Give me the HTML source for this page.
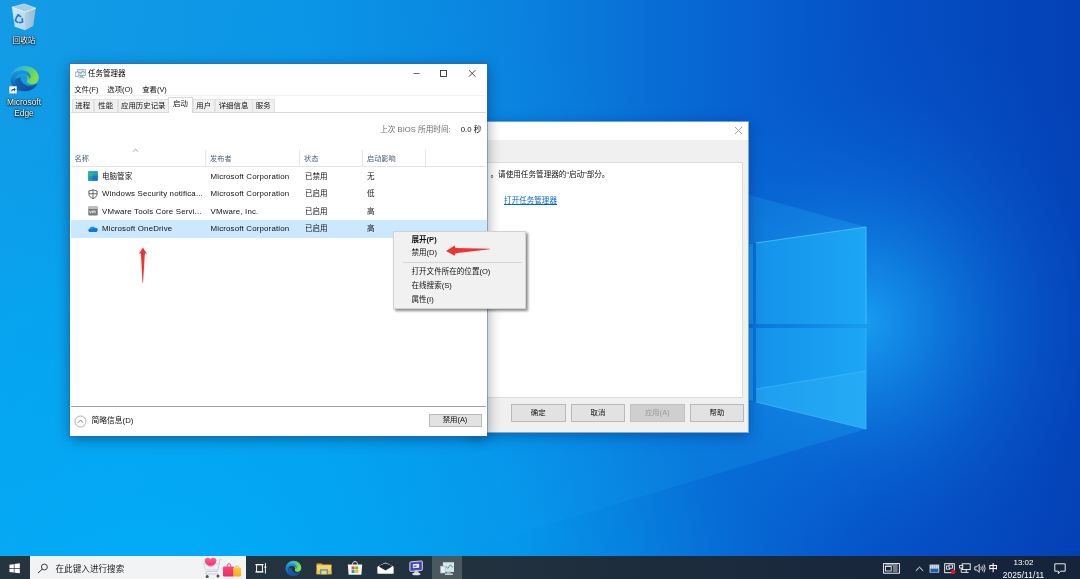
<!DOCTYPE html>
<html lang="zh-CN">
<head>
<meta charset="utf-8">
<title>任务管理器</title>
<style>
*{box-sizing:border-box;margin:0;padding:0}
html,body{width:1080px;height:579px;overflow:hidden;background:#0a6fd2}
body{position:relative;font-family:"Liberation Sans","Noto Sans CJK SC",sans-serif;font-size:7.4px;color:#111;line-height:1}
.abs{position:absolute}
#tm,#dlg,#ctx,#tb,.dlabel{will-change:transform}
.t{position:absolute;white-space:nowrap;line-height:10px;height:10px}
#wall{position:absolute;left:0;top:0;width:1080px;height:579px}
/* desktop icons */
.dlabel{position:absolute;color:#fff;text-align:center;font-size:7.6px;line-height:10.5px;text-shadow:0 0 2px rgba(0,0,0,.95),0 1px 2px rgba(0,0,0,.85),0 0 1px rgba(0,0,0,.8);white-space:nowrap}
/* system config dialog */
#dlg{position:absolute;left:470px;top:120.6px;width:279px;height:312.4px;background:#f0f0f0;border:1px solid #7fa9d8;border-top-color:#6aa0d8;box-shadow:0 3px 12px rgba(0,20,70,.35)}
#dlg .title{position:absolute;left:0;top:0;right:0;height:18.4px;background:#fff}
#dlg .pane{position:absolute;left:8px;top:39.9px;width:264px;height:236.3px;background:#fff;border:1px solid #dcdcdc}
.btn{position:absolute;height:17.5px;border:1px solid #b9b9b9;background:#e2e2e2;text-align:center;line-height:15.5px;font-size:7.4px;color:#111;white-space:nowrap}
.btn.dis{color:#9a9a9a;background:#cfcfcf;border-color:#c2c2c2}
/* task manager */
#tm{position:absolute;left:70px;top:64px;width:417px;height:372px;background:#fff;border:1px solid #fff;outline:1px solid rgba(70,100,140,.45);box-shadow:0 3px 13px rgba(0,10,40,.42)}
.tab{position:absolute;top:33.8px;height:13.2px;background:#f0f0f0;border:1px solid #e2e2e2;border-bottom:none;text-align:center;line-height:12px;font-size:7.4px;white-space:nowrap}
.tab.sel{top:31.8px;height:16.2px;background:#fff;line-height:12.4px;z-index:2;border-color:#d9d9d9}
.hdr{position:absolute;color:#4c607a;font-size:7.2px;line-height:10px;white-space:nowrap}
.sep{position:absolute;top:85px;width:1px;height:17px;background:#e5e5e5}
.row{position:absolute;left:0;width:416px;height:17.5px}
.row>*{margin-left:1px}
.row.sel{background:#cce8ff}
.row.sel span{margin-top:-.1px}
.row.sel svg{margin-top:-.1px}
.row span{position:absolute;top:4.1px;line-height:10px;white-space:nowrap;font-size:7.55px;color:#111}
.row span.l{font-size:7.9px;letter-spacing:.16px}
/* context menu */
#ctx{position:absolute;left:393px;top:230.5px;width:132.5px;height:77.5px;background:#f1f1f1;border:1px solid #d2d2d2;box-shadow:1.5px 1.5px 2.5px rgba(0,0,0,.45)}
#ctx .mi{position:absolute;left:17.5px;line-height:10px;font-size:7.55px;white-space:nowrap;color:#111}
/* taskbar */
#tb{position:absolute;left:0;top:555.6px;width:1080px;height:23.4px;background:linear-gradient(90deg,#24353f 0%,#22313e 45%,#19283c 75%,#15233b 100%)}
#tb .clock{position:absolute;color:#fff;font-size:7.3px;line-height:10px;text-align:center;white-space:nowrap}
</style>
</head>
<body>

<!-- ================= WALLPAPER ================= -->
<svg id="wall" viewBox="0 0 1080 579">
  <defs>
    <linearGradient id="gBase" x1="0" y1="0" x2="1" y2="0">
      <stop offset="0" stop-color="#10a0ea"/>
      <stop offset="0.28" stop-color="#0b96e7"/>
      <stop offset="0.48" stop-color="#0a82de"/>
      <stop offset="0.66" stop-color="#0765d2"/>
      <stop offset="0.80" stop-color="#0551c6"/>
      <stop offset="1" stop-color="#0440b6"/>
    </linearGradient>
    <radialGradient id="gGlow" cx="862" cy="322" r="300" gradientUnits="userSpaceOnUse">
      <stop offset="0" stop-color="#1aa6f5" stop-opacity=".9"/>
      <stop offset="0.22" stop-color="#1492ec" stop-opacity=".68"/>
      <stop offset="0.5" stop-color="#0c76de" stop-opacity=".38"/>
      <stop offset="0.78" stop-color="#0860d2" stop-opacity=".12"/>
      <stop offset="1" stop-color="#0a60d0" stop-opacity="0"/>
    </radialGradient>
    <radialGradient id="gBL" cx="170" cy="640" r="720" gradientUnits="userSpaceOnUse">
      <stop offset="0" stop-color="#00b0fa" stop-opacity=".9"/>
      <stop offset="0.5" stop-color="#00a8f5" stop-opacity=".55"/>
      <stop offset="0.8" stop-color="#0496ea" stop-opacity=".15"/>
      <stop offset="1" stop-color="#0090e8" stop-opacity="0"/>
    </radialGradient>
    <radialGradient id="gTL" cx="0" cy="0" r="330" gradientUnits="userSpaceOnUse">
      <stop offset="0" stop-color="#2a86cc" stop-opacity=".16"/>
      <stop offset="1" stop-color="#2a86cc" stop-opacity="0"/>
    </radialGradient>
    <linearGradient id="gPane" x1="0" y1="0" x2="1" y2="0">
      <stop offset="0" stop-color="#1492ea"/>
      <stop offset="1" stop-color="#1ca6f5"/>
    </linearGradient>
    <linearGradient id="gBeamU" x1="0" y1="0" x2="1" y2="0">
      <stop offset="0" stop-color="#1aa3f2" stop-opacity=".05"/>
      <stop offset="1" stop-color="#25acf6" stop-opacity=".3"/>
    </linearGradient>
    <linearGradient id="gBeamL" x1="1" y1="0" x2="0" y2="0">
      <stop offset="0" stop-color="#1aa3f2" stop-opacity=".30"/>
      <stop offset="1" stop-color="#10a0f0" stop-opacity=".04"/>
    </linearGradient>
  </defs>
  <rect width="1080" height="579" fill="url(#gBase)"/>
  <rect width="1080" height="579" fill="url(#gGlow)"/>
  <rect width="1080" height="579" fill="url(#gBL)"/>
  <rect width="1080" height="579" fill="url(#gTL)"/>
  <!-- light beams -->
  <polygon points="487,123.4 866,227 756,243 487,243" fill="url(#gBeamU)"/>
  <polygon points="400,412 756,402 866,429 400,569" fill="url(#gBeamL)"/>
  <!-- panes -->
  <polygon points="700,251 753,243.5 753,324 700,324" fill="#1492ea"/>
  <polygon points="700,328 753,328 753,401 700,390" fill="#1492ea"/>
  <polygon points="756,243 866,227 866,324 756,324" fill="url(#gPane)"/>
  <polygon points="756,328 866,328 866,429 756,402" fill="url(#gPane)"/>
  <polygon points="756,389 866,371 866,429 756,402" fill="#36b6fa" opacity=".33"/>
  <polyline points="756,243 866,227 866,324" fill="none" stroke="#52c8ff" stroke-width="1" opacity=".8"/>
  <polyline points="866,328 866,429 756,402" fill="none" stroke="#42bbfc" stroke-width="1" opacity=".7"/>
  <line x1="756" y1="389" x2="866" y2="371" stroke="#55c6ff" stroke-width=".8" opacity=".55"/>
</svg>

<!-- ================= DESKTOP ICONS ================= -->
<!-- recycle bin -->
<svg class="abs" style="left:10px;top:3px" width="28" height="29" viewBox="0 0 28 29">
  <defs>
    <linearGradient id="binL" x1="0" y1="0" x2="1" y2="1">
      <stop offset="0" stop-color="#d6ebf8" stop-opacity=".95"/>
      <stop offset="1" stop-color="#c2dcee" stop-opacity=".92"/>
    </linearGradient>
    <linearGradient id="binR" x1="0" y1="0" x2="1" y2="0">
      <stop offset="0" stop-color="#b9d2e4" stop-opacity=".95"/>
      <stop offset="1" stop-color="#a3bfd4" stop-opacity=".9"/>
    </linearGradient>
  </defs>
  <polygon points="1.9,4.3 14.2,.9 25.8,5.2 15,9.1" fill="#a9cbe4" stroke="#dcebf5" stroke-width=".7" stroke-linejoin="round"/>
  <polygon points="1.9,4.3 15,9.1 15,27.2 4.7,23.8" fill="url(#binL)"/>
  <polygon points="15,9.1 25.8,5.2 23.2,22.9 15,27.2" fill="url(#binR)"/>
  <path d="M1.9 4.3 L15 9.1 L25.8 5.2" fill="none" stroke="#e8f3fa" stroke-width=".8"/>
  <g fill="none" stroke="#1c7ad2" stroke-width="1.7" stroke-linecap="round" stroke-linejoin="round">
    <path d="M6.4 14.6 L8.2 11.8 L10.6 13.6"/>
    <path d="M12.2 15.8 L12.6 19 L9.8 19.6"/>
    <path d="M7.8 19.4 L5.4 17.8 L6 15.6"/>
  </g>
</svg>
<div class="dlabel" style="left:4px;top:35.8px;width:40px">回收站</div>
<!-- edge -->
<svg class="abs" style="left:8.6px;top:65.4px" width="31" height="27.4" viewBox="0 0 34 33" preserveAspectRatio="none">
  <defs>
    <linearGradient id="edA" x1="0" y1="0" x2="1" y2=".35"><stop offset="0" stop-color="#2b9fe2"/><stop offset=".45" stop-color="#38bdd0"/><stop offset=".78" stop-color="#5fd36a"/><stop offset="1" stop-color="#86de4c"/></linearGradient>
    <linearGradient id="edB" x1="0" y1="0" x2="0" y2="1"><stop offset="0" stop-color="#1e96dc"/><stop offset="1" stop-color="#0c59a4"/></linearGradient>
    <linearGradient id="edC" x1="0" y1="0" x2="1" y2="1"><stop offset="0" stop-color="#1268b8"/><stop offset="1" stop-color="#1b4596"/></linearGradient>
  </defs>
  <path d="M17 1.2 C26.2 1.2 32.6 8 32.6 15.4 C32.6 20 29.4 23.2 25.2 23.2 C21.8 23.2 19.6 21.6 19.6 19.6 C19.6 18.6 20.4 18 20.4 16.4 C20.4 13.6 17.6 11.2 14 11.2 C8.4 11.2 3 15.4 1.6 19.8 C.2 10.2 7.2 1.2 17 1.2 Z" fill="url(#edA)"/>
  <path d="M1.6 17.4 C1.6 10.6 7.6 6.2 13.8 6.2 C19.4 6.2 23.6 9.8 23.6 13.8 C23.6 15.8 22.6 17 22.6 17 C22.6 14 19 10.8 14.2 10.8 C8.6 10.8 6.4 15.6 6.4 19.4 C6.4 26 11.6 31 17.8 31.6 C8.6 32.4 1.6 25.6 1.6 17.4 Z" fill="url(#edB)"/>
  <path d="M6.4 19.4 C6.4 26.4 12 31.8 19 31.6 C24.4 31.4 28.8 27.6 30.6 23.6 C30.9 22.9 30.2 22.5 29.7 22.9 C28 24.2 25.8 25 23.4 25 C17 25 12.4 20.4 13 15 C10 15 6.4 16.4 6.4 19.4 Z" fill="url(#edC)"/>
</svg>
<svg class="abs" style="left:9px;top:86.2px" width="8" height="7.6" viewBox="0 0 8 8" preserveAspectRatio="none">
  <rect x=".2" y=".2" width="7.6" height="7.6" fill="#fff" stroke="#a9b4bf" stroke-width=".4"/>
  <path d="M2 6.6 C2 4 3.4 3 5 3 V1.6 L6.8 3.8 L5 5.8 V4.4 C3.8 4.4 2.8 4.8 2 6.6 Z" fill="#1d4fb0"/>
</svg>
<div class="dlabel" style="left:-2px;top:97.4px;width:52px;font-size:8.4px;line-height:11.2px">Microsoft<br>Edge</div>

<!-- ================= SYSTEM CONFIG DIALOG (behind) ================= -->
<div id="dlg">
  <div class="title">
    <svg class="abs" style="left:263.3px;top:4.3px" width="9" height="9" viewBox="0 0 9 9"><path d="M1 1 L8 8 M8 1 L1 8" stroke="#a3a3a3" stroke-width="1" fill="none"/></svg>
  </div>
  <div class="pane">
    <div class="t" style="left:10.5px;top:7.4px;font-size:7.6px;color:#111">。请使用任务管理器的“启动”部分。</div>
    <div class="t" style="left:24.1px;top:33.2px;font-size:7.55px;color:#0066cc;text-decoration:underline">打开任务管理器</div>
  </div>
  <div class="btn" style="left:40px;top:282.4px;width:54.5px">确定</div>
  <div class="btn" style="left:100px;top:282.4px;width:54px">取消</div>
  <div class="btn dis" style="left:159px;top:282.4px;width:54.5px">应用(A)</div>
  <div class="btn" style="left:219px;top:282.4px;width:54px">帮助</div>
</div>

<!-- ================= TASK MANAGER ================= -->
<div id="tm">
  <!-- title icon -->
  <svg class="abs" style="left:4px;top:4px" width="11" height="10" viewBox="0 0 11 10">
    <rect x="2.6" y="0.6" width="7.8" height="5.8" fill="#d7eefb" stroke="#8ea4b5" stroke-width=".8"/>
    <polyline points="3.2,4.6 4.8,3.4 6,4.4 7.6,2 9.8,3.6" fill="none" stroke="#3f9a4a" stroke-width=".8"/>
    <rect x="0.4" y="3" width="3.4" height="4.6" fill="#eef3f7" stroke="#8ea4b5" stroke-width=".7"/>
    <rect x="5" y="6.6" width="3" height="1.4" fill="#9fb0bd"/>
    <rect x="3.6" y="8" width="5.8" height="1.1" fill="#b8c5cf"/>
  </svg>
  <div class="t" style="left:17px;top:4.1px;font-size:7.5px;color:#000">任务管理器</div>
  <!-- window controls -->
  <svg class="abs" style="left:340px;top:3px" width="72" height="12" viewBox="0 0 72 12">
    <path d="M2.5 5.5 H8.5" stroke="#555" stroke-width=".9" fill="none"/>
    <rect x="29.5" y="2.5" width="6" height="6" stroke="#333" stroke-width=".9" fill="none"/>
    <path d="M58 2.2 L64.4 8.6 M64.4 2.2 L58 8.6" stroke="#333" stroke-width=".9" fill="none"/>
  </svg>
  <!-- menu -->
  <div class="t" style="left:3.2px;top:20px">文件(F)</div>
  <div class="t" style="left:36.3px;top:20px">选项(O)</div>
  <div class="t" style="left:71.2px;top:20px">查看(V)</div>
  <div class="abs" style="left:0;top:30px;width:415px;height:1px;background:#f0f0f0"></div>
  <!-- tabs -->
  <div class="abs" style="left:0;top:46.9px;width:415px;height:1px;background:#d9d9d9"></div>
  <div class="tab" style="left:0.5px;width:22.5px">进程</div>
  <div class="tab" style="left:22.5px;width:24.5px">性能</div>
  <div class="tab" style="left:46.5px;width:51.5px">应用历史记录</div>
  <div class="tab sel" style="left:97px;width:25px">启动</div>
  <div class="tab" style="left:121.5px;width:22.5px">用户</div>
  <div class="tab" style="left:143.5px;width:38px">详细信息</div>
  <div class="tab" style="left:181px;width:22.5px">服务</div>
  <!-- BIOS line -->
  <div class="t" style="right:4.5px;top:59.6px;font-size:7.65px;color:#6d6d6d">上次 BIOS 所用时间:<span style="color:#111;margin-left:10px;font-size:7.8px">0.0 秒</span></div>
  <!-- column header -->
  <svg class="abs" style="left:60.5px;top:83px" width="7" height="5" viewBox="0 0 7 5"><path d="M0.8 3.8 L3.5 1.2 L6.2 3.8" stroke="#8a8a8a" stroke-width=".8" fill="none"/></svg>
  <div class="hdr" style="left:3.5px;top:89.1px">名称</div>
  <div class="hdr" style="left:139px;top:89.1px">发布者</div>
  <div class="hdr" style="left:233px;top:89.1px">状态</div>
  <div class="hdr" style="left:296px;top:89.1px">启动影响</div>
  <div class="sep" style="left:134px"></div>
  <div class="sep" style="left:227.5px"></div>
  <div class="sep" style="left:290.7px"></div>
  <div class="sep" style="left:353.9px"></div>
  <div class="abs" style="left:0;top:101.4px;width:415px;height:1px;background:#e5e5e5"></div>
  <!-- rows -->
  <div class="row" style="top:102.5px">
    <svg class="abs" style="left:16.2px;top:3.9px" width="10" height="10" viewBox="0 0 11 11">
      <rect x=".3" y=".3" width="10.4" height="10.4" rx=".8" fill="#1d8fd6"/>
      <polygon points=".3,.3 6,.3 5,5.4 .3,6.2" fill="#2fb67c"/>
      <polygon points="6,.3 10.7,.3 10.7,4.6 5,5.4" fill="#1f9fc4"/>
      <polygon points=".3,6.2 5,5.4 4.4,10.7 .3,10.7" fill="#1aa0a8"/>
      <polygon points="5,5.4 10.7,4.6 10.7,10.7 4.4,10.7" fill="#2173d0"/>
    </svg>
    <span style="left:30px">电脑管家</span><span class="l" style="left:138.5px">Microsoft Corporation</span><span style="left:233px">已禁用</span><span style="left:295px">无</span>
  </div>
  <div class="row" style="top:120.1px">
    <svg class="abs" style="left:16.2px;top:3.9px" width="10" height="10" viewBox="0 0 11 11">
      <path d="M5.5 .7 C4 1.7 2.4 2 1 2 V5.4 C1 8 3 9.6 5.5 10.5 C8 9.6 10 8 10 5.4 V2 C8.6 2 7 1.7 5.5 .7 Z" fill="#fff" stroke="#3a3a3a" stroke-width=".9"/>
      <path d="M5.5 .9 V10.3 M1.1 5.2 H9.9" stroke="#3a3a3a" stroke-width=".8" fill="none"/>
    </svg>
    <span class="l" style="left:30px">Windows Security notifica...</span><span class="l" style="left:138.5px">Microsoft Corporation</span><span style="left:233px">已启用</span><span style="left:295px">低</span>
  </div>
  <div class="row" style="top:137.6px">
    <svg class="abs" style="left:16.2px;top:3.9px" width="10" height="10" viewBox="0 0 11 11">
      <rect x=".3" y=".6" width="10.4" height="9.8" rx="1" fill="#787878"/>
      <rect x=".3" y=".6" width="10.4" height="2.8" rx="1" fill="#bdbdbd"/>
      <path d="M1.6 5.2 L2.7 8 L3.8 5.2 M4.9 8 V5.6 Q4.9 5.2 5.6 5.2 Q6.4 5.2 6.4 5.8 V8 M6.4 5.8 Q6.6 5.2 7.3 5.2 Q8 5.2 8 5.8 V8" stroke="#fff" stroke-width=".8" fill="none"/>
    </svg>
    <span class="l" style="left:30px">VMware Tools Core Servi...</span><span class="l" style="left:138.5px">VMware, Inc.</span><span style="left:233px">已启用</span><span style="left:295px">高</span>
  </div>
  <div class="row sel" style="top:155.3px;height:17.3px">
    <svg class="abs" style="left:16.2px;top:3.9px" width="10" height="10" viewBox="0 0 11 11">
      <path d="M2.6 8.9 C1.2 8.9 .3 8 .3 6.9 C.3 5.8 1.2 5 2.2 5 C2.5 3.7 3.6 2.9 4.9 2.9 C6 2.9 6.9 3.5 7.4 4.4 C7.7 4.3 8 4.2 8.3 4.2 C9.6 4.2 10.7 5.2 10.7 6.6 C10.7 7.9 9.7 8.9 8.4 8.9 Z" fill="#0f78d4"/>
      <path d="M2.2 5 C2.5 3.7 3.6 2.9 4.9 2.9 C6 2.9 6.9 3.5 7.4 4.4 L4.2 6.3 Z" fill="#1a90e8"/>
    </svg>
    <span class="l" style="left:30px">Microsoft OneDrive</span><span class="l" style="left:138.5px">Microsoft Corporation</span><span style="left:233px">已启用</span><span style="left:295px">高</span>
  </div>
  <!-- footer -->
  <div class="abs" style="left:0;top:340.6px;width:415px;height:1px;background:#a0a0a0"></div>
  <svg class="abs" style="left:3.3px;top:349.8px" width="13" height="13" viewBox="0 0 13 13">
    <circle cx="6.5" cy="6.5" r="5.5" fill="#fff" stroke="#9a9a9a" stroke-width=".8"/>
    <path d="M3.8 7.8 L6.5 5.1 L9.2 7.8" stroke="#707070" stroke-width=".9" fill="none"/>
  </svg>
  <div class="t" style="left:20.6px;top:351px;font-size:7.75px">简略信息(D)</div>
  <div class="btn" style="left:357.5px;top:349px;width:53px;height:12.6px;line-height:10.6px">禁用(A)</div>
</div>

<!-- ================= CONTEXT MENU ================= -->
<div id="ctx">
  <div class="mi" style="top:2.8px;font-weight:bold">展开(P)</div>
  <div class="mi" style="top:15.8px">禁用(D)</div>
  <div class="abs" style="left:9px;top:29.7px;width:119px;height:1px;background:#d5d5d5"></div>
  <div class="mi" style="top:34.9px">打开文件所在的位置(O)</div>
  <div class="mi" style="top:48.9px">在线搜索(S)</div>
  <div class="mi" style="top:62.8px">属性(I)</div>
</div>

<!-- ================= RED ARROWS ================= -->
<svg class="abs" style="left:130px;top:240px" width="380" height="50" viewBox="130 240 380 50">
  <!-- up arrow under OneDrive -->
  <path d="M142.9 247.4 L147 253.9 L144.9 253.3 L143 282.9 L142.5 282.9 L140.9 253.3 L138.8 253.9 Z" fill="#f03232"/>
  <!-- left arrow at context menu -->
  <path d="M446 251 L454.7 245.6 L455.5 248.1 L489.9 248.8 L489.9 249.3 L455.5 253.2 L454.7 255.7 Z" fill="#f03232"/>
</svg>

<!-- ================= TASKBAR ================= -->
<div id="tb">
  <!-- start -->
  <svg class="abs" style="left:8.7px;top:7px" width="11.6" height="10.8" viewBox="0 0 12 12" preserveAspectRatio="none">
    <polygon points=".5,2 5,1.3 5,5.6 .5,5.6" fill="#fff"/>
    <polygon points="5.7,1.2 11.2,.4 11.2,5.6 5.7,5.6" fill="#fff"/>
    <polygon points=".5,6.3 5,6.3 5,10.6 .5,9.9" fill="#fff"/>
    <polygon points="5.7,6.3 11.2,6.3 11.2,11.5 5.7,10.7" fill="#fff"/>
  </svg>
  <!-- search box -->
  <div class="abs" style="left:29.5px;top:0;width:216.7px;height:23px;background:#f1f3f4"></div>
  <svg class="abs" style="left:36.5px;top:5.9px" width="12" height="12" viewBox="0 0 12 12">
    <circle cx="7.4" cy="5" r="2.95" fill="none" stroke="#2a2a2a" stroke-width=".9"/>
    <path d="M5.3 7.1 L1 11" stroke="#2a2a2a" stroke-width="1" fill="none"/>
  </svg>
  <div class="t" style="left:55.5px;top:8px;font-size:8.6px;color:#222;line-height:11px;height:11px">在此键入进行搜索</div>
  <!-- heart cart + bags -->
  <svg class="abs" style="left:202px;top:0" width="42" height="23" viewBox="0 0 42 23">
    <defs>
      <linearGradient id="hrt" x1="0" y1="0" x2="0" y2="1"><stop offset="0" stop-color="#ff5f8f"/><stop offset="1" stop-color="#ea2a63"/></linearGradient>
      <linearGradient id="bagR" x1="0" y1="0" x2="0" y2="1"><stop offset="0" stop-color="#f7457b"/><stop offset="1" stop-color="#ec2c66"/></linearGradient>
      <linearGradient id="bagY" x1="0" y1="0" x2="0" y2="1"><stop offset="0" stop-color="#ffc93a"/><stop offset="1" stop-color="#fbab1c"/></linearGradient>
    </defs>
    <!-- cart -->
    <path d="M19.6 3.6 H17.9 L15.6 15.4 H4.4" fill="none" stroke="#c6cad6" stroke-width="1"/>
    <path d="M1.6 7.6 H17.2 L15.9 13.8 H3.4 Z" fill="#eceef4" stroke="#c3c7d4" stroke-width=".6"/>
    <path d="M4.4 15.4 L3.6 18 H16.6" fill="none" stroke="#c6cad6" stroke-width=".9"/>
    <circle cx="5.2" cy="20.4" r="1.5" fill="#4a4f5e"/><circle cx="16" cy="20" r="1.5" fill="#4a4f5e"/>
    <!-- heart -->
    <path d="M8.6 3.6 C7.4 1 3 1.2 2.8 4.6 C2.7 8 6.8 10 8.6 11.4 C10.4 10 14.6 8 14.4 4.6 C14.2 1.2 9.8 1 8.6 3.6 Z" fill="url(#hrt)"/>
    <path d="M3.4 9.6 H15.6 L15.2 12.4 H4 Z" fill="#f2f3f8" opacity=".55"/>
    <!-- bags -->
    <path d="M25.2 10.8 C25.2 6.6 28.8 6.6 28.8 10.8" stroke="#e02a62" stroke-width="1" fill="none"/>
    <rect x="21" y="10.6" width="11" height="9.8" rx="1" fill="url(#bagR)"/>
    <path d="M33.4 11.6 C33.4 9.4 36.6 9.4 36.6 11.6" stroke="#f0a01a" stroke-width=".8" fill="none"/>
    <rect x="31.2" y="11.4" width="7.8" height="9" rx="1.2" fill="url(#bagY)"/>
  </svg>
  <!-- task view -->
  <svg class="abs" style="left:255px;top:6.5px" width="12" height="11" viewBox="0 0 12 11">
    <rect x="1.6" y="1.7" width="5.8" height="7.2" fill="none" stroke="#fff" stroke-width=".95"/>
    <path d="M.3 1.7 H8.6 M.3 8.9 H8.6" stroke="#fff" stroke-width=".95" fill="none"/>
    <path d="M10.4 .1 V10.6" stroke="#fff" stroke-width=".95" fill="none"/>
    <rect x="9.5" y="3.4" width="1.8" height="1.6" fill="#fff"/>
  </svg>
  <!-- edge -->
  <svg class="abs" style="left:284.5px;top:3.5px" width="17" height="17" viewBox="0 0 34 33">
    <path d="M17 1.2 C26.2 1.2 32.6 8 32.6 15.4 C32.6 20 29.4 23.2 25.2 23.2 C21.8 23.2 19.6 21.6 19.6 19.6 C19.6 18.6 20.4 18 20.4 16.4 C20.4 13.6 17.6 11.2 14 11.2 C8.4 11.2 3 15.4 1.6 19.8 C.2 10.2 7.2 1.2 17 1.2 Z" fill="url(#edA)"/>
    <path d="M1.6 17.4 C1.6 10.6 7.6 6.2 13.8 6.2 C19.4 6.2 23.6 9.8 23.6 13.8 C23.6 15.8 22.6 17 22.6 17 C22.6 14 19 10.8 14.2 10.8 C8.6 10.8 6.4 15.6 6.4 19.4 C6.4 26 11.6 31 17.8 31.6 C8.6 32.4 1.6 25.6 1.6 17.4 Z" fill="url(#edB)"/>
    <path d="M6.4 19.4 C6.4 26.4 12 31.8 19 31.6 C24.4 31.4 28.8 27.6 30.6 23.6 C30.9 22.9 30.2 22.5 29.7 22.9 C28 24.2 25.8 25 23.4 25 C17 25 12.4 20.4 13 15 C10 15 6.4 16.4 6.4 19.4 Z" fill="url(#edC)"/>
  </svg>
  <!-- explorer -->
  <svg class="abs" style="left:315.5px;top:5.5px" width="16" height="13" viewBox="0 0 16 13">
    <path d="M.6 1.4 H5.6 L6.8 2.6 H15.4 V5 H.6 Z" fill="#e9a91c"/>
    <rect x=".6" y="3.2" width="14.8" height="9" fill="#fcd462"/>
    <rect x=".6" y="8.4" width="14.8" height="3.8" fill="#f4bf3e"/>
    <rect x="4" y="7.2" width="8" height="5" fill="#3d9be3"/>
    <rect x="5.4" y="8.6" width="5.2" height="3.6" fill="#fcd462"/>
  </svg>
  <!-- store -->
  <svg class="abs" style="left:346.5px;top:4px" width="16" height="16" viewBox="0 0 16 16">
    <path d="M5.4 4.6 C5.4 .6 10.6 .6 10.6 4.6" stroke="#f2f2f2" stroke-width="1" fill="none"/>
    <path d="M.8 4.4 H15.2 L14.4 14.8 H1.6 Z" fill="#f5f5f5"/>
    <rect x="4.6" y="6.4" width="3" height="3" fill="#f25022"/><rect x="8.2" y="6.4" width="3" height="3" fill="#7fba00"/>
    <rect x="4.6" y="10" width="3" height="3" fill="#00a4ef"/><rect x="8.2" y="10" width="3" height="3" fill="#ffb900"/>
  </svg>
  <!-- mail -->
  <svg class="abs" style="left:377px;top:6px" width="17" height="12" viewBox="0 0 17 12">
    <path d="M.6 4.4 L8.5 .4 L16.4 4.4 V11.6 H.6 Z" fill="#fff"/>
    <path d="M2.2 4.8 L8.5 8.6 L14.8 4.8 V3.8 L8.5 1.2 L2.2 3.8 Z" fill="#1c2836"/>
    <path d="M.6 5 L8.5 9.6 L16.4 5 V11.6 H.6 Z" fill="#fff"/>
    <path d="M9.4 9 L16.4 5 V11.6 L9 9.4 Z" fill="#1c2836" opacity=".0"/>
  </svg>
  <!-- monitor app -->
  <svg class="abs" style="left:408.8px;top:4px" width="15" height="16" viewBox="0 0 15 16">
    <g transform="translate(0,1.2) skewY(-5)">
      <rect x=".8" y=".8" width="12.6" height="9.6" rx="1" fill="#5b59c4" stroke="#cfd0f0" stroke-width=".9"/>
      <rect x="2.3" y="2.3" width="9.6" height="6.4" fill="#3b3aa8"/>
      <rect x="3.8" y="3.3" width="6.4" height="4.2" rx=".6" fill="#eef0fb"/>
      <rect x="4.6" y="4.6" width="3" height="1.8" fill="#5a6fd6"/>
    </g>
    <path d="M5.6 10.4 L5 13.4 H9.8 L9.2 10.2 Z" fill="#c9ccd6"/>
    <ellipse cx="7.3" cy="14" rx="4.2" ry="1.3" fill="#dfe1e6"/>
  </svg>
  <!-- task manager (active) -->
  <div class="abs" style="left:432px;top:0;width:30px;height:24px;background:#4a5860"></div>
  <svg class="abs" style="left:439.6px;top:5.6px" width="14.8" height="14" viewBox="0 0 16 14" preserveAspectRatio="none">
    <rect x="3.6" y=".8" width="11.6" height="8.6" fill="#cfe6f5" stroke="#e6ebf0" stroke-width=".9"/>
    <polyline points="4.6,7 7,5 8.6,6.4 11,3 14.2,5.4" fill="none" stroke="#3f9a4a" stroke-width=".9"/>
    <rect x=".6" y="4.2" width="5" height="6.8" fill="#e9eef2" stroke="#aab6c0" stroke-width=".7"/>
    <rect x="7.4" y="9.6" width="4" height="2" fill="#aab6c0"/>
    <rect x="5.4" y="11.4" width="8.4" height="1.6" fill="#c6ced6"/>
  </svg>
  <!-- tray: news -->
  <svg class="abs" style="left:882.5px;top:6.5px" width="17" height="11" viewBox="0 0 17 11">
    <rect x=".6" y=".6" width="15.8" height="9.6" fill="none" stroke="#fff" stroke-width=".9"/>
    <rect x="2.4" y="3.4" width="5.8" height="4.6" fill="none" stroke="#fff" stroke-width=".8"/>
    <path d="M2.4 2 H14.6 M10 4 H14.6 M10 6 H14.6 M10 8 H14.6" stroke="#fff" stroke-width=".8"/>
  </svg>
  <!-- chevron -->
  <svg class="abs" style="left:914.5px;top:9.5px" width="9" height="6" viewBox="0 0 9 6"><path d="M.8 4.8 L4.5 1.2 L8.2 4.8" stroke="#fff" stroke-width="1" fill="none"/></svg>
  <!-- tray icon 1 -->
  <svg class="abs" style="left:929px;top:7.5px" width="11" height="10" viewBox="0 0 11 10">
    <rect x=".6" y=".6" width="9.6" height="8" fill="#d9dde2"/>
    <rect x="1.4" y="4.6" width="8" height="3.4" fill="#1a5fb8"/>
    <path d="M2.6 .8 V4.6 M4.6 .8 V4.6 M6.6 .8 V4.6 M8.4 .8 V4.6" stroke="#8a9099" stroke-width=".5"/>
  </svg>
  <!-- tray icon 2 (vm with red dot) -->
  <svg class="abs" style="left:943.5px;top:6.5px" width="12" height="12" viewBox="0 0 12 12">
    <rect x=".7" y=".7" width="9.6" height="9" fill="none" stroke="#fff" stroke-width=".9"/>
    <rect x="2.6" y="3" width="3.2" height="3.2" fill="none" stroke="#fff" stroke-width=".8"/>
    <rect x="5" y="2" width="3.4" height="3.2" fill="#1b2a3b" stroke="#fff" stroke-width=".8"/>
    <circle cx="9.2" cy="9" r="2.3" fill="#e81123"/>
  </svg>
  <!-- network -->
  <svg class="abs" style="left:959px;top:7px" width="12" height="11" viewBox="0 0 12 11">
    <rect x="3.2" y=".8" width="8" height="5.8" fill="none" stroke="#fff" stroke-width=".9"/>
    <path d="M7.2 6.8 V9 M5 9.4 H9.6" stroke="#fff" stroke-width=".9"/>
    <rect x=".6" y="2.4" width="3.2" height="2.6" fill="#1b2a3b" stroke="#fff" stroke-width=".8"/>
    <path d="M2.2 5 V9.4 H5" stroke="#fff" stroke-width=".8" fill="none"/>
  </svg>
  <!-- volume -->
  <svg class="abs" style="left:973.5px;top:7px" width="12" height="11" viewBox="0 0 12 11">
    <path d="M.8 3.8 H2.8 L5.2 1.4 V9.4 L2.8 7 H.8 Z" fill="none" stroke="#fff" stroke-width=".85" stroke-linejoin="round"/>
    <path d="M6.8 3.8 Q7.8 5.4 6.8 7 M8.4 2.6 Q10 5.4 8.4 8.2 M10 1.4 Q12.2 5.4 10 9.4" stroke="#fff" stroke-width=".8" fill="none"/>
  </svg>
  <div class="t" style="left:988.5px;top:6.4px;font-size:9.4px;color:#fff;line-height:11px;height:11px;font-weight:500">中</div>
  <div class="clock" style="left:1003px;top:2.3px;width:41px;font-size:8px">13:02</div>
  <div class="clock" style="left:998px;top:14px;width:51px;font-size:8.3px;letter-spacing:.12px">2025/11/11</div>
  <!-- notification -->
  <svg class="abs" style="left:1053.5px;top:6.5px" width="12" height="12" viewBox="0 0 12 12">
    <path d="M.8 .8 H11.2 V8.2 H6.6 L4.4 10.6 V8.2 H.8 Z" fill="none" stroke="#fff" stroke-width=".9" stroke-linejoin="round"/>
  </svg>
</div>

</body>
</html>
